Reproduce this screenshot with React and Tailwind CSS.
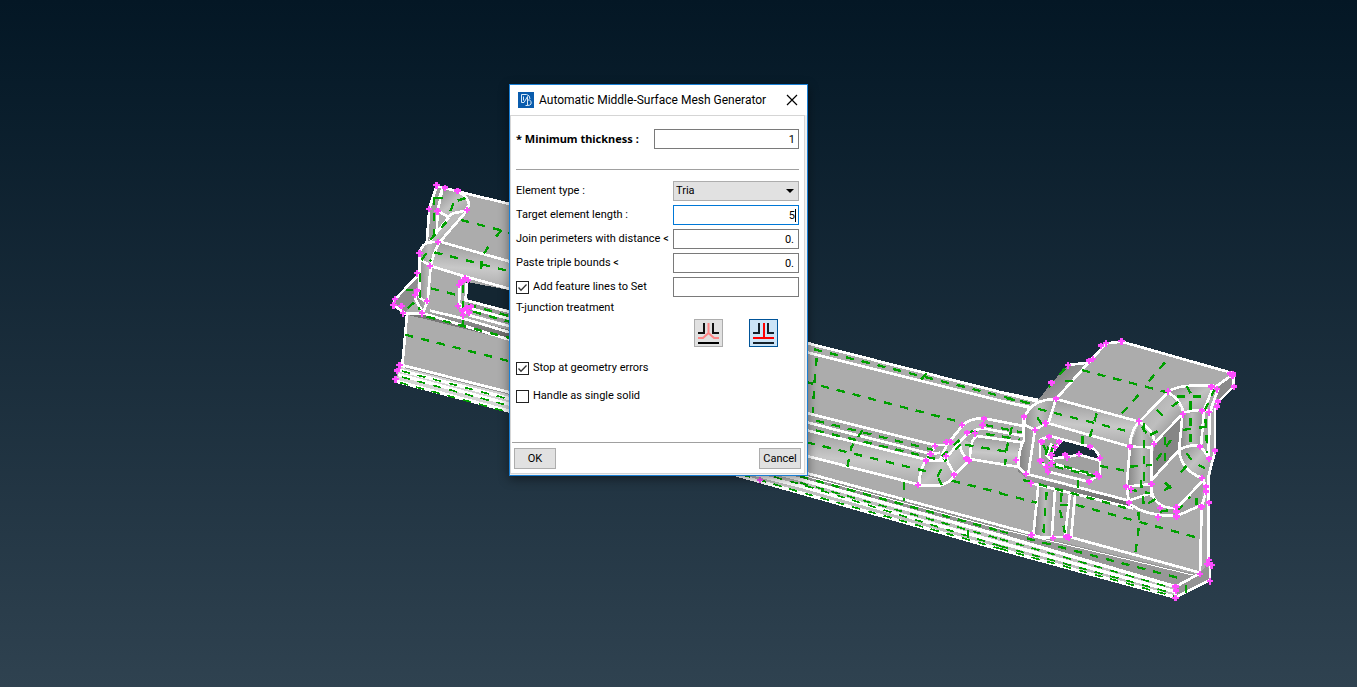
import { useState } from "react";

const WHITE = { fill: "none", stroke: "#ffffff", strokeWidth: 8 };
const DASH = { fill: "none", stroke: "#00a000", strokeWidth: 7, strokeDasharray: "25 24" };

// Vertex markers: small magenta crosses
function Nodes({ points }) {
  const d = points
    .map(([x, y]) => `M${x - 10} ${y}h19M${x} ${y - 9}v19`)
    .join("");
  return <path d={d} fill="none" stroke="#ff4dff" strokeWidth={7} />;
}

function LeftEnd() {
  return (
    <g transform="translate(385 170) scale(0.33333)">
      <path
        d="M155 48L218 64L390 106V730L35 634L40 590L52 585L66 434L25 405L28 390L103 312V250L125 222L133 115Z"
        fill="#acacac"
      />
      <path d="M133 115L155 48L172 58L160 125L155 215L125 222Z" fill="#9d9d9d" />
      <path d="M172 58L218 64L240 80L252 105L240 122L205 130L188 140L158 122Z" fill="url(#boss)" />
      <path d="M188 140L240 122L165 215L135 217Z" fill="url(#tube)" />
      <path d="M165 215L390 279V361L137 288L150 240Z" fill="url(#ridge)" />
      <path d="M105 250L115 230L135 217L165 215L150 240L137 288L128 392L113 430L92 380L103 375Z" fill="url(#post)" />
      <path d="M103 312L28 390L25 405L60 430L90 385Z" fill="#8e8e8e" />
      <path d="M115 428L390 500V514L66 434Z" fill="#777777" />
      <path d="M135 420L390 484V510L125 432Z" fill="url(#groove)" />
      <path d="M243 335L390 364V424L250 390L243 370Z" fill="#142632" />
      <path d="M245 392L390 430V470L255 425Z" fill="#999999" />
      <path d="M45 585L390 672V730L35 634Z" fill="#d5d5d5" />

      <g {...WHITE}>
        <path d="M155 48L218 64L390 106M155 48L133 115L125 222M172 58L158 122L155 190M172 58L162 85" />
        <path d="M218 64Q252 82 252 105L240 122L205 130L188 140L158 122" />
        <path d="M246 122L165 215M192 142L135 212" />
        <path d="M103 375V250Q112 218 135 217L165 215L390 279" />
        <path d="M105 268L137 288L235 318L390 361M165 215Q148 240 137 288L128 392L113 430" />
        <path d="M235 318L225 345L222 400L245 430M244 338V370L240 390L390 430M255 415L390 451M250 435L390 473" />
        <path d="M103 312L28 390L25 405L60 430L115 432M103 350L90 385L115 430M100 380L130 400M115 430L390 514M135 422L240 447L390 492" />
        <path d="M66 434L52 585" />
      </g>
      <g fill="none" stroke="#ffffff" strokeWidth={10}>
        <path d="M45 585L390 672M42 600L390 690M40 614L390 707M35 634L390 728" />
      </g>
      <path d="M60 593L390 677" fill="none" stroke="#9a9a9a" strokeWidth={3} />
      <g {...DASH}>
        <path d="M228 150L345 180L374 188M350 180L328 206M310 230L290 262L288 320" />
        <path d="M148 247L390 308M138 355L215 375M60 494L390 578" />
        <path d="M147 80V200M150 84H190M205 100L190 140M218 92L242 84M185 155L135 210M110 270L125 248L138 275M62 360H85M68 415L90 395L105 420" />
        <path d="M105 310V400M235 345V420M250 404L390 443M235 450V472M125 440L390 508M265 425L390 460" />
        <path d="M50 603L390 692M50 621L390 712M45 638L390 732" strokeWidth={5} />
      </g>
      <Nodes
        points={[
          [155, 46], [180, 53], [218, 62], [133, 117], [158, 124], [246, 120], [160, 216],
          [104, 250], [136, 288], [97, 310], [97, 362], [90, 375], [127, 393], [30, 388], [26, 406],
          [50, 408], [55, 430], [112, 430], [240, 325], [230, 335], [250, 330], [222, 345], [220, 408],
          [232, 422], [235, 436], [245, 414], [258, 410], [252, 428], [44, 586], [36, 602], [32, 628],
        ]}
      />
    </g>
  );
}

function MiddleSpan() {
  return (
    <g transform="translate(800 330) scale(0.33333)">
      <path d="M-30 26L700 212L730 204V694L-230 424V300Z" fill="#acacac" />
      <path d="M0 246L405 345H440L400 380L378 390L0 296Z" fill="#a6a6a6" />
      <path d="M0 296L390 392L360 440L355 464L0 373Z" fill="url(#ridge)" />
      <path d="M378 392L438 382L485 325L515 340L510 388L465 435L420 468H358Z" fill="url(#boss)" />
      <path d="M440 345L485 290L515 268H552L550 295L520 300L430 390H400Z" fill="#b8b8b8" />
      <path d="M530 318L660 340L650 410L510 388Z" fill="url(#ridge)" />
      <path d="M0 424L600 586V616L0 445Z" fill="#959595" />
      <path d="M-230 388L0 448L600 616V658L-230 424Z" fill="#c0c0c0" />
      <g {...WHITE}>
        <path d="M-30 26L710 214M0 62L690 234" />
        <path d="M0 244L405 345H440L485 290Q505 264 552 265L670 288" />
        <path d="M0 272L395 372L420 368M0 296L390 392H430L490 325Q510 300 550 295L670 318" />
        <path d="M530 318L665 337M0 373L358 464M405 350L378 390Q355 430 358 466H420Q450 460 465 435L510 387L650 410" />
        <path d="M530 318Q510 330 510 388M438 380L445 400L465 434M480 345L485 365L500 388M440 345L420 390" />
        <path d="M0 424L600 586" />
      </g>
      <g fill="none" stroke="#ffffff" strokeWidth={10}>
        <path d="M-230 390L0 448L600 616M-230 410L0 468L600 638M-230 424L0 488L600 658" />
      </g>
      <path d="M0 434L600 597" fill="none" stroke="#ffffff" strokeWidth={3} />
      <g {...DASH}>
        <path d="M42 58L690 220M50 84L44 150L38 250M15 155L465 272M380 130L362 150" />
        <path d="M0 260L400 360M0 290L430 392M20 337L392 427M188 300L155 350L142 410" />
        <path d="M496 344L640 368M555 285L670 308M510 305L660 328M636 290L620 355L615 405M455 452L600 488" />
        <path d="M312 456V512M425 380L500 310L540 295M412 440L440 385M415 445L425 465M465 360L500 325" />
        <path d="M0 439L600 603" />
        <path d="M0 458L600 627M-220 402L0 462L600 648M-220 420L0 486L600 656M505 600V625" strokeWidth={5} />
      </g>
      <Nodes
        points={[
          [405, 348], [440, 336], [486, 285], [552, 266], [548, 286], [526, 310], [502, 308], [452, 336],
          [378, 392], [392, 372], [438, 378], [463, 434], [500, 386], [508, 392], [355, 465],
          [-120, 450],
        ]}
      />
    </g>
  );
}

function RightEnd() {
  return (
    <g transform="translate(1000 330) scale(0.33333)">
      <path
        d="M205 105L265 98L318 40L365 35L700 130V170L655 215L645 240V365L625 470L624 690L630 750L527 802L0 658V480L55 420L75 260L115 210L155 158Z"
        fill="#acacac"
      />
      <path d="M205 105L265 98L168 207L115 210L155 158Z" fill="url(#shoulder)" />
      <path d="M168 207L418 275L390 350L145 280Z" fill="url(#ridge)" />
      <path d="M75 260Q95 212 168 207L145 280L105 300L85 430L95 458L55 425V360L70 340Z" fill="url(#post)" />
      <path d="M418 275L462 335L455 350L455 500L380 470L390 350Z" fill="url(#post)" />
      <path d="M418 275L505 187L548 250L462 340Z" fill="url(#tube)" />
      <path d="M505 187Q530 160 640 168L610 240L548 250Z" fill="url(#boss)" />
      <path d="M548 250H608L605 350L537 360Z" fill="url(#post)" />
      <path d="M548 255L462 340L455 450L537 360Z" fill="#868686" />
      <path d="M455 450L537 360L545 410L610 445L530 535L470 530Z" fill="#a8a8a8" />
      <path d="M537 360L600 347L628 385L610 445Q540 425 537 360Z" fill="url(#boss)" />
      <path d="M645 178L700 135V170L655 215Z" fill="#8a8a8a" />
      <path d="M380 470L455 462L470 530L530 535L610 450L605 525L530 558L430 545L387 518Z" fill="#a0a0a0" />
      <path d="M85 430L387 512L400 535L95 460Z" fill="url(#groove)" />
      <path d="M115 465L165 480L155 625L100 615Z" fill="url(#post)" />
      <path d="M0 592L600 735L522 770L0 616Z" fill="#979797" />
      <path d="M0 616L522 770L527 802L0 658Z" fill="#c0c0c0" />
      <path d="M527 768L600 730L624 700L630 750L527 802Z" fill="#949494" />
      <path d="M120 330L148 318L270 350L300 380V430L290 450L145 425L120 385Z" fill="#a0a0a0" />
      <path d="M185 332L270 350L300 380L295 390L237 374L160 382L155 365Z" fill="#1b2e3b" />

      <g {...WHITE}>
        <path d="M168 207L318 40L365 35L700 130V170L655 215L645 240V365L625 440V690M205 105L265 98" />
        <path d="M168 207L418 275L505 187Q530 160 650 168L700 132" />
        <path d="M0 186L115 210M0 212L85 230" />
        <path d="M75 285V260Q95 208 168 207L145 280L390 350L455 352L465 340M75 285L105 300L137 280" />
        <path d="M105 300L85 430M70 262L72 330Q55 360 55 410L80 435" />
        <path d="M418 275Q390 305 390 350L380 470L455 462M418 275Q465 305 462 335L455 352V500" />
        <path d="M462 340L550 250Q548 215 505 187M550 250Q580 235 640 243M548 250L537 360Q545 425 610 445M537 360Q570 340 605 350M455 450L537 360" />
        <path d="M640 170L612 240L603 350L628 385M655 175L630 245L625 385" />
        <path d="M120 385V330L148 318L270 350Q300 365 300 392V430L290 440M120 385L145 425L265 455L290 440M155 340L140 375L160 400L290 440M160 385L205 380L237 374L300 392M185 332L155 368" />
        <path d="M80 432L387 512M95 460L400 535" />
        <path d="M380 470L387 518Q430 558 530 558L605 525M455 462Q450 535 530 535L610 450L620 480L605 530M387 512L450 490" />
        <path d="M115 465L100 615M165 480L155 625M210 490L195 620M225 495L213 625M95 615L130 623L200 620" />
        <path d="M605 530L600 728M213 622L600 728M0 586L100 613M527 802L630 750V700M527 802V770L600 730" />
      </g>
      <g fill="none" stroke="#ffffff" strokeWidth={10}>
        <path d="M0 616L520 768M0 638L525 785M0 658L527 802" />
      </g>
      <path d="M0 597L590 738" fill="none" stroke="#ffffff" strokeWidth={3} />
      <g {...DASH}>
        <path d="M245 120L505 188M495 97L435 167M415 195L360 257M195 153H220M195 115L135 185" />
        <path d="M115 237L375 302M290 250L270 320M112 262L130 290M20 205L90 220" />
        <path d="M248 318V345M300 408L375 422M130 345L155 400L290 435M145 350L130 400M160 345L150 380M165 410L290 440" />
        <path d="M432 280V470M390 410L455 405M425 290L440 310M450 315L480 300M470 240L495 265M515 230L540 212M495 320V410M470 390L520 320" />
        <path d="M560 168L572 190V340M530 200H620M548 300L620 290M645 175L615 240L622 370M560 370L575 390L535 435M595 405L615 415" />
        <path d="M495 458L520 482M493 482L520 460M422 450L432 530M387 478L450 490" />
        <path d="M445 520L470 505M480 545L540 535L570 500M590 505V525" />
        <path d="M70 450L400 540M0 490L110 518M180 525H230L600 625M140 485L130 610M185 490L180 540L195 610M415 545L418 580L405 680M235 450V475" />
        <path d="M80 625L540 745M558 765V790" />
        <path d="M0 603L30 611M0 627L520 775M0 648L520 790M0 656L525 800" strokeWidth={5} />
      </g>
      <Nodes
        points={[
          [205, 106], [155, 158], [168, 206], [303, 47], [318, 40], [365, 34], [267, 92], [280, 87],
          [690, 131], [700, 131], [698, 138], [702, 170], [655, 215], [652, 230], [635, 170], [652, 178], [505, 184],
          [418, 274], [390, 350], [462, 342], [550, 253], [606, 242], [628, 247], [645, 362],
          [600, 350], [628, 386], [606, 444], [618, 470], [618, 485], [628, 518], [605, 530],
          [137, 280], [106, 300], [72, 260], [148, 320], [125, 335], [178, 335], [165, 352], [195, 374],
          [202, 382], [237, 372], [270, 350], [300, 384], [155, 376], [122, 392], [155, 400],
          [140, 412], [145, 426], [290, 432], [298, 440], [268, 455], [48, 390], [78, 432], [94, 460],
          [378, 470], [455, 462], [387, 518], [394, 478], [480, 534], [475, 562], [530, 532],
          [530, 545], [530, 560], [95, 615], [160, 624], [200, 620], [208, 622],
          [628, 690], [622, 702], [635, 706], [630, 754], [600, 732], [527, 770], [528, 782], [527, 804],
        ]}
      />
    </g>
  );
}

function ModelView() {
  return (
    <svg
      className="absolute inset-0 h-full w-full"
      viewBox="0 0 1357 687"
      preserveAspectRatio="xMidYMin slice"
      shapeRendering="crispEdges"
      aria-hidden="true"
    >
      <defs>
        <linearGradient id="ridge" x1="0.5" y1="0" x2="0.4" y2="1">
          <stop offset="0" stopColor="#999999" />
          <stop offset="0.55" stopColor="#c8c8c8" />
          <stop offset="1" stopColor="#a8a8a8" />
        </linearGradient>
        <linearGradient id="post" x1="0" x2="1">
          <stop offset="0" stopColor="#828282" />
          <stop offset="0.55" stopColor="#bcbcbc" />
          <stop offset="1" stopColor="#989898" />
        </linearGradient>
        <linearGradient id="tube" x1="0" y1="0" x2="1" y2="1">
          <stop offset="0" stopColor="#a8a8a8" />
          <stop offset="0.5" stopColor="#bebebe" />
          <stop offset="1" stopColor="#7d7d7d" />
        </linearGradient>
        <linearGradient id="boss" x1="0" y1="0" x2="1" y2="1">
          <stop offset="0" stopColor="#8a8a8a" />
          <stop offset="0.5" stopColor="#c2c2c2" />
          <stop offset="1" stopColor="#9d9d9d" />
        </linearGradient>
        <linearGradient id="shoulder" x1="0" y1="0" x2="1" y2="1">
          <stop offset="0" stopColor="#6e6e6e" />
          <stop offset="1" stopColor="#b4b4b4" />
        </linearGradient>
        <linearGradient id="groove" x1="0.5" y1="0" x2="0.46" y2="1">
          <stop offset="0" stopColor="#aaaaaa" />
          <stop offset="1" stopColor="#5e5e5e" />
        </linearGradient>
      </defs>
      <LeftEnd />
      <MiddleSpan />
      <RightEnd />
    </svg>
  );
}

function AppIcon() {
  return (
    <svg width="16" height="16" viewBox="0 0 16 16" className="shrink-0" aria-hidden="true">
      <rect width="16" height="16" fill="#0a5cad" />
      <path
        d="M3.500 2.500H8.500Q12 3 12 7M3.500 2.500V10.500H6M6 10.500L9.500 4.500V13.500H7.500M9.500 8H11.500Q14 9 13 12Q12 13.500 9.500 13.500M5.500 4.500V8.500"
        fill="none"
        stroke="#dcebf8"
        strokeWidth="1"
      />
    </svg>
  );
}

function SplitIcon() {
  return (
    <svg width="23" height="22" viewBox="0 0 23 22" fill="none" strokeWidth="2" className="shrink-0" aria-hidden="true">
      <path d="M7 1V11H1M16 1V11H22" stroke="#111111" />
      <path d="M11.500 1V11L6 16H1M11.500 11L17 16H22" stroke="#ff8585" />
      <path d="M1 21H22" stroke="#000000" />
    </svg>
  );
}

function JoinIcon() {
  return (
    <svg width="23" height="22" viewBox="0 0 23 22" fill="none" strokeWidth="2" className="shrink-0" aria-hidden="true">
      <path d="M7 1V11H1M16 1V11H22" stroke="#14202b" />
      <path d="M12 1V16M1 16H22" stroke="#ff0000" />
      <path d="M1 21H22" stroke="#14202b" />
    </svg>
  );
}

function Field({ id, label, value, active }) {
  const [text, setText] = useState(value);
  return (
    <div className="flex h-5 items-center justify-between">
      <label htmlFor={id} className="whitespace-nowrap">{label}</label>
      <div
        className={`flex h-5 w-[126px] shrink-0 items-center border bg-white pr-0.5 ${
          active ? "border-[#0078d7]" : "border-[#7a7a7a]"
        }`}
      >
        <input
          id={id}
          value={text}
          onChange={(e) => setText(e.target.value)}
          className={`h-full w-full min-w-0 bg-transparent text-right outline-none ${
            active ? "" : "pr-0.5"
          }`}
        />
        {active ? <span className="h-[13px] w-px shrink-0 bg-black" /> : null}
      </div>
    </div>
  );
}

function Check({ id, label, defaultChecked }) {
  return (
    <div className="flex items-center gap-1">
      <span className="grid h-[13px] w-[13px]">
        <input
          id={id}
          type="checkbox"
          defaultChecked={defaultChecked}
          className="peer col-start-1 row-start-1 h-[13px] w-[13px] appearance-none border border-[#222222] bg-white"
        />
        <svg
          viewBox="0 0 13 13"
          className="pointer-events-none invisible col-start-1 row-start-1 h-[13px] w-[13px] peer-checked:visible"
          aria-hidden="true"
        >
          <path d="M2.500 6.500L5 9.300L10.500 3.500" fill="none" stroke="#333333" strokeWidth="1.300" />
        </svg>
      </span>
      <label htmlFor={id} className="whitespace-nowrap">{label}</label>
    </div>
  );
}

function MeshDialog() {
  const [junction, setJunction] = useState("join");
  const tool = "flex h-7 w-[29px] items-center justify-center border";
  const on = "border-[#005499] bg-[#cce4f7]";
  const off = "border-[#adadad] bg-[#e1e1e1]";

  return (
    <section
      role="dialog"
      aria-labelledby="dialog-title"
      className="relative mr-10 w-[299px] border border-[#1a7fd4] bg-[#f0f0f0] font-[Roboto,sans-serif] text-[11px] leading-4 text-black shadow-[0_3px_10px_rgba(0,0,0,0.45)]"
    >
      <header className="flex h-[30px] items-center bg-white pl-2 pr-[7px]">
        <AppIcon />
        <h1 id="dialog-title" className="ml-[5px] flex-1 whitespace-nowrap text-[12px]">
          Automatic Middle-Surface Mesh Generator
        </h1>
        <button aria-label="Close" className="flex h-4 w-4 items-center justify-center">
          <svg width="12" height="12" viewBox="0 0 12 12" aria-hidden="true">
            <path d="M1 1L11 11M11 1L1 11" stroke="#000000" strokeWidth="1.200" />
          </svg>
        </button>
      </header>

      <form
        className="mb-px mr-0.5 border border-[#d5d5d5] bg-white pb-1"
        onSubmit={(e) => e.preventDefault()}
      >
        <div className="px-[5px] pt-[13px]">
          <div className="flex h-5 items-center justify-between">
            <label htmlFor="thickness" className="whitespace-nowrap font-['Noto_Sans',sans-serif] font-bold">
              * Minimum thickness :
            </label>
            <input
              id="thickness"
              defaultValue="1"
              className="h-5 w-[145px] border border-[#7a7a7a] bg-white pr-[3px] text-right outline-none"
            />
          </div>

          <hr className="mt-5 border-[#a0a0a0]" />

          <div className="mt-[11px] flex flex-col gap-1">
            <div className="flex h-5 items-center justify-between">
              <label htmlFor="element-type">Element type :</label>
              <div className="relative w-[126px]">
                <select
                  id="element-type"
                  className="block h-5 w-full appearance-none border border-[#adadad] bg-[#e1e1e1] pl-0.5 outline-none"
                >
                  <option>Tria</option>
                </select>
                <svg
                  width="8"
                  height="4"
                  viewBox="0 0 8 4"
                  className="pointer-events-none absolute right-[5px] top-2"
                  aria-hidden="true"
                >
                  <path d="M0 0H8L4 4Z" />
                </svg>
              </div>
            </div>
            <Field id="length" label="Target element length :" value="5" active />
            <Field id="distance" label="Join perimeters with distance <" value="0." />
            <Field id="bounds" label="Paste triple bounds <" value="0." />
            <div className="flex h-5 items-center justify-between">
              <Check id="features" label="Add feature lines to Set" defaultChecked />
              <input
                aria-label="Set"
                className="h-5 w-[126px] border border-[#7a7a7a] bg-white px-1 outline-none"
              />
            </div>
          </div>

          <p className="mt-[3px]">T-junction treatment</p>
          <div className="mt-[3px] flex justify-end gap-[26px] pr-[21px]">
            <button
              type="button"
              aria-label="Split junction"
              aria-pressed={junction === "split"}
              onClick={() => setJunction("split")}
              className={`${tool} ${junction === "split" ? on : off}`}
            >
              <SplitIcon />
            </button>
            <button
              type="button"
              aria-label="Join junction"
              aria-pressed={junction === "join"}
              onClick={() => setJunction("join")}
              className={`${tool} ${junction === "join" ? on : off}`}
            >
              <JoinIcon />
            </button>
          </div>

          <div className="mt-[13px] flex flex-col gap-3">
            <Check id="stop" label="Stop at geometry errors" defaultChecked />
            <Check id="single" label="Handle as single solid" />
          </div>
        </div>

        <hr className="mx-px mt-[38px] border-[#a0a0a0]" />
        <div className="mt-[5px] flex justify-between px-[3px]">
          <button type="button" className="h-[21px] w-[42px] border border-[#adadad] bg-[#e1e1e1]">
            OK
          </button>
          <button type="button" className="h-[21px] w-[42px] border border-[#adadad] bg-[#e1e1e1]">
            Cancel
          </button>
        </div>
      </form>
    </section>
  );
}

export default function App() {
  return (
    <main className="relative flex min-h-screen items-start justify-center overflow-hidden bg-linear-to-b from-[#041725] to-[#2f4250] pt-[84px]">
      <ModelView />
      <MeshDialog />
    </main>
  );
}
